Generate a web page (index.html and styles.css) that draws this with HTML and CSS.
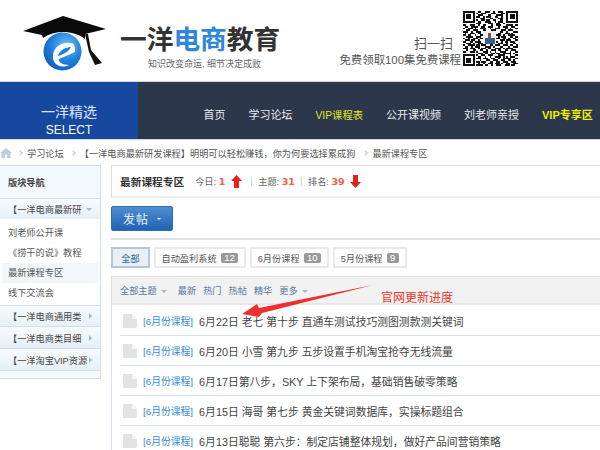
FILE: index.html
```html
<!DOCTYPE html>
<html lang="zh">
<head>
<meta charset="utf-8">
<title>最新课程专区</title>
<link rel="stylesheet" href="styles.css">
</head>
<body>
<header class="top">
  <div class="logo">
    <svg class="cap" width="84" height="56" viewBox="0 0 84 56">
      <defs>
        <radialGradient id="ball" cx="0.6" cy="0.35" r="0.75">
          <stop offset="0" stop-color="#6fc0f4"/>
          <stop offset="0.55" stop-color="#1f7fdc"/>
          <stop offset="1" stop-color="#0a58b8"/>
        </radialGradient>
      </defs>
      <circle cx="39.500" cy="36.500" r="19" fill="url(#ball)"/>
      <path d="M50 28.500 C42 26 31 30 30 40 C29 50 38 54 46 50 C40 50 35 47 36 44 L52 37 C52 33 52 30 50 28.500 Z" fill="#fff"/>
      <path d="M35 41 C36 36 42 32 48 32 C46 36 42 39 35 41 Z" fill="#1f7fdc"/>
      <path d="M0 16 L40 1 L83 14 L62 19 L62 24 C50 15 32 15 20 23 L19 20 Z" fill="#0a0a0a"/>
      <path d="M62 19 L65 19 L68 35 L79 48 L72 50 L66 37 Z" fill="#111"/>
    </svg>
    <div class="brand">
      <div class="brand-name">一洋<span class="blue">电商</span>教育</div>
      <div class="brand-sub">知识改变命运, 细节决定成败</div>
    </div>
  </div>
  <div class="scan">
    <div class="scan-text">
      <div class="scan-a">扫一扫</div>
      <div class="scan-b">免费领取100集免费课程</div>
    </div>
    <svg class="qr" width="55" height="55" viewBox="0 0 33 33" shape-rendering="crispEdges">
      <rect width="33" height="33" fill="#fff"/>
      <path fill="#111" d="M0 0h7v7H0zM26 0h7v7h-7zM0 26h7v7H0z"/>
      <path fill="#fff" d="M1 1h5v5H1zM27 1h5v5h-5zM1 27h5v5H1z"/>
      <path fill="#111" d="M2 2h3v3H2zM28 2h3v3h-3zM2 28h3v3H2z"/>
      <path stroke="#111" stroke-width="1" fill="none" d="M9 .5h2M13 .5h3M18 .5h1M21 .5h3M8 1.500h1M11 1.500h3M17 1.500h3M23 1.500h2M9 2.500h3M15 2.500h2M20 2.500h4M8 3.500h2M12 3.500h1M14 3.500h3M19 3.500h2M23 3.500h1M10 4.500h3M16 4.500h2M21 4.500h3M8 5.500h1M11 5.500h2M14 5.500h2M18 5.500h2M22 5.500h2M9 6.500h2M13 6.500h4M19 6.500h1M21 6.500h3M8 7.500h3M15 7.500h3M20 7.500h2M24 7.500h1M0 8.500h2M4 8.500h3M9 8.500h1M12 8.500h2M17 8.500h1M20 8.500h3M26 8.500h4M31 8.500h2M1 9.500h2M5 9.500h4M11 9.500h2M15 9.500h3M21 9.500h1M24 9.500h3M29 9.500h2M0 10.500h1M3 10.500h3M7 10.500h1M10 10.500h4M16 10.500h1M19 10.500h3M25 10.500h2M28 10.500h1M31 10.500h2M2 11.500h2M6 11.500h3M12 11.500h2M17 11.500h3M23 11.500h3M27 11.500h3M0 12.500h3M5 12.500h1M8 12.500h3M19 12.500h1M22 12.500h2M26 12.500h1M30 12.500h3M1 13.500h1M4 13.500h3M9 13.500h2M21 13.500h2M25 13.500h3M29 13.500h1M0 14.500h2M3 14.500h2M7 14.500h1M10 14.500h2M20 14.500h3M24 14.500h1M27 14.500h4M2 15.500h4M8 15.500h3M21 15.500h1M23 15.500h3M28 15.500h2M31 15.500h2M0 16.500h1M3 16.500h1M6 16.500h3M10 16.500h2M20 16.500h2M24 16.500h2M27 16.500h1M30 16.500h2M1 17.500h3M5 17.500h2M9 17.500h1M22 17.500h3M26 17.500h3M31 17.500h2M0 18.500h2M4 18.500h2M7 18.500h4M20 18.500h1M23 18.500h1M25 18.500h2M28 18.500h3M2 19.500h3M6 19.500h1M9 19.500h3M21 19.500h3M26 19.500h1M30 19.500h2M0 20.500h1M3 20.500h4M8 20.500h2M11 20.500h3M16 20.500h2M19 20.500h3M24 20.500h3M28 20.500h2M32 20.500h1M1 21.500h2M5 21.500h1M7 21.500h3M13 21.500h4M18 21.500h1M22 21.500h2M27 21.500h1M30 21.500h3M0 22.500h3M4 22.500h3M9 22.500h1M11 22.500h3M15 22.500h2M19 22.500h4M24 22.500h1M26 22.500h4M2 23.500h1M6 23.500h2M10 23.500h2M14 23.500h1M17 23.500h3M21 23.500h2M25 23.500h2M29 23.500h3M0 24.500h2M4 24.500h3M8 24.500h1M12 24.500h3M16 24.500h1M19 24.500h1M22 24.500h4M28 24.500h1M31 24.500h2M9 25.500h3M13 25.500h2M17 25.500h2M20 25.500h2M24 25.500h5M30 25.500h1M8 26.500h1M11 26.500h2M15 26.500h3M21 26.500h3M24 26.500h1M28 26.500h1M31 26.500h2M9 27.500h2M13 27.500h1M16 27.500h1M19 27.500h4M24 27.500h1M26 27.500h1M28 27.500h3M8 28.500h3M12 28.500h3M17 28.500h2M21 28.500h1M24 28.500h5M31 28.500h2M10 29.500h1M14 29.500h2M18 29.500h3M23 29.500h2M27 29.500h2M30 29.500h1M8 30.500h2M11 30.500h3M16 30.500h2M20 30.500h2M24 30.500h3M29 30.500h3M9 31.500h1M12 31.500h1M15 31.500h3M19 31.500h3M23 31.500h1M26 31.500h2M30 31.500h3M8 32.500h4M13 32.500h2M17 32.500h1M20 32.500h3M25 32.500h3M29 32.500h2"/>
      <rect x="12" y="12" width="8" height="8" fill="#eef1f5"/>
      <rect x="13" y="16" width="6" height="4" fill="#3c5f88"/>
      <rect x="15" y="13" width="2" height="3" fill="#7a5a44"/>
    </svg>
  </div>
</header>

<nav class="nav">
  <div class="select">
    <div class="select-a">一洋精选</div>
    <div class="select-b">SELECT</div>
  </div>
  <div class="menu">
    <a class="mi">首页</a>
    <a class="mi">学习论坛</a>
    <a class="mi vip">VIP课程表</a>
    <a class="mi">公开课视频</a>
    <a class="mi">刘老师亲授</a>
    <a class="mi vip strong">VIP专享区</a>
  </div>
</nav>

<div class="crumbs">
  <svg class="home" width="12" height="10" viewBox="0 0 12 10"><path d="M6 0 L12 5 H10.500 V10 H7 V6.500 H5 V10 H1.500 V5 H0 Z" fill="#b9cfdf"/></svg>
  <i class="sep"></i><span>学习论坛</span><i class="sep s2"></i><span>【一洋电商最新研发课程】明明可以轻松赚钱，你为何要选择累成狗</span><i class="sep s3"></i><span>最新课程专区</span>
</div>

<main class="wrap">
  <aside class="side">
    <div class="side-title">版块导航</div>
    <div class="group">【一洋电商最新研<i class="down side-arrow"></i></div>
    <div class="side-links">
      <div class="link">刘老师公开课</div>
      <div class="link">《捞干的说》教程</div>
      <div class="link on">最新课程专区</div>
      <div class="link">线下交流会</div>
    </div>
    <div class="group">【一洋电商通用类<i class="right side-arrow"></i></div>
    <div class="group">【一洋电商类目细<i class="right side-arrow"></i></div>
    <div class="group">【一洋淘宝VIP资源<i class="right side-arrow"></i></div>
    <div class="side-end"></div>
  </aside>

  <section class="content">
    <div class="head">
      <b class="head-title">最新课程专区</b>
      <span class="stat">今日: <b>1</b></span>
      <svg class="arrow a1" width="11" height="13" viewBox="0 0 11 13"><path d="M5.500 0 L11 6 H8 V13 H3 V6 H0 Z" fill="#e8201c"/></svg>
      <i class="bar"></i>
      <span class="stat">主题: <b>31</b></span>
      <i class="bar b2"></i>
      <span class="stat">排名: <b>39</b></span>
      <svg class="arrow" width="11" height="13" viewBox="0 0 11 13"><path d="M5.500 13 L11 7 H8 V0 H3 V7 H0 Z" fill="#e8201c"/></svg>
    </div>
    <div class="post-row">
      <button class="post">发帖<i class="caret"></i></button>
    </div>
    <div class="tabs">
      <span class="tab active">全部</span>
      <span class="tab">自动盈利系统<em>12</em></span>
      <span class="tab">6月份课程<em>10</em></span>
      <span class="tab">5月份课程<em>9</em></span>
    </div>
    <div class="filter">
      <span class="f-first">全部主题<i class="down"></i></span>
      <span>最新</span><span>热门</span><span>热帖</span><span>精华</span><span>更多<i class="down"></i></span>
    </div>
    <ul class="list">
      <li class="row"><svg class="doc" width="14" height="14" viewBox="0 0 14 14"><path d="M1 0 H9 L14 5 V13 Q14 14 13 14 H1 Q0 14 0 13 V1 Q0 0 1 0 Z" fill="#e3e3e3"/><path d="M9 0 V5 H14 Z" fill="#f5f5f5"/></svg><a>[6月份课程]</a><span class="t">6月22日 老七 第十步 直通车测试技巧测图测款测关键词</span></li>
      <li class="row"><svg class="doc" width="14" height="14" viewBox="0 0 14 14"><path d="M1 0 H9 L14 5 V13 Q14 14 13 14 H1 Q0 14 0 13 V1 Q0 0 1 0 Z" fill="#e3e3e3"/><path d="M9 0 V5 H14 Z" fill="#f5f5f5"/></svg><a>[6月份课程]</a><span class="t">6月20日 小雪 第九步 五步设置手机淘宝抢夺无线流量</span></li>
      <li class="row"><svg class="doc" width="14" height="14" viewBox="0 0 14 14"><path d="M1 0 H9 L14 5 V13 Q14 14 13 14 H1 Q0 14 0 13 V1 Q0 0 1 0 Z" fill="#e3e3e3"/><path d="M9 0 V5 H14 Z" fill="#f5f5f5"/></svg><a>[6月份课程]</a><span class="t">6月17日第八步，SKY 上下架布局，基础销售破零策略</span></li>
      <li class="row"><svg class="doc" width="14" height="14" viewBox="0 0 14 14"><path d="M1 0 H9 L14 5 V13 Q14 14 13 14 H1 Q0 14 0 13 V1 Q0 0 1 0 Z" fill="#e3e3e3"/><path d="M9 0 V5 H14 Z" fill="#f5f5f5"/></svg><a>[6月份课程]</a><span class="t">6月15日 海哥 第七步 黄金关键词数据库，实操标题组合</span></li>
      <li class="row"><svg class="doc" width="14" height="14" viewBox="0 0 14 14"><path d="M1 0 H9 L14 5 V13 Q14 14 13 14 H1 Q0 14 0 13 V1 Q0 0 1 0 Z" fill="#e3e3e3"/><path d="M9 0 V5 H14 Z" fill="#f5f5f5"/></svg><a>[6月份课程]</a><span class="t">6月13日聪聪 第六步：制定店铺整体规划，做好产品间营销策略</span></li>
    </ul>
    <svg class="note-arrow" width="136" height="36" viewBox="0 0 136 36"><path d="M2 31 L17 21 L19 25 L133 2 L22 30 L19 34 Z" fill="#ee2f2f"/></svg>
    <span class="note">官网更新进度</span>
  </section>
</main>
</body>
</html>
```
FILE: styles.css
```css
* { box-sizing: border-box; }
html, body { margin: 0; padding: 0; }
body {
  width: 600px;
  height: 450px;
  overflow: hidden;
  background: #fff;
  color: #444;
  font-family: "Liberation Sans", "Noto Sans CJK SC", sans-serif;
  font-size: 9.2px;
}
i, em { font-style: normal; }
ul { list-style: none; margin: 0; padding: 0; }

.top { height: 82px; display: flex; justify-content: space-between; padding: 15px 82px 0 23px; border-bottom: 1px solid #d8d8d8; }
.logo { display: flex; gap: 13px; }
.brand { padding-top: 8px; }
.brand-name { font-size: 26.700px; line-height: 34px; font-weight: 700; color: #333; white-space: nowrap; }
.blue { color: #2f86dc; }
.brand-sub { font-size: 9px; line-height: 14px; color: #666; padding-left: 28px; white-space: nowrap; }
.scan { display: flex; align-items: flex-start; gap: 2px; margin-top: -4px; height: 55px; }
.scan-text { text-align: right; color: #555; padding-top: 25px; }
.scan-a { font-size: 13px; line-height: 16px; padding-right: 8px; }
.scan-b { font-size: 11.400px; line-height: 16px; white-space: nowrap; }

.nav { height: 57px; display: flex; background: #2d374b; }
.select { flex: none; width: 138px; background: #1648a0; color: #fff; text-align: center; padding-top: 21px; }
.select-a { font-size: 14px; line-height: 18px; color: #dce6f5; }
.select-b { font-size: 12px; line-height: 18px; }
.menu { flex: 1; min-width: 0; display: flex; align-items: center; gap: 23px; padding: 7px 0 0 65.500px; font-size: 11px; color: #e6e9ef; white-space: nowrap; }
.mi { display: block; }
.vip { color: #e4e823; font-size: 10.300px; }
.strong { font-weight: 700; color: #eef000; font-size: 11px; }

.crumbs { height: 26px; display: flex; align-items: center; color: #555; white-space: nowrap; border-top: 1px solid #d8d8d8; }
.sep { width: 4px; height: 4px; margin: 0 5px 0 6px; border-top: 1px solid #bcc6ce; border-right: 1px solid #bcc6ce; transform: rotate(45deg); }
.s2 { margin-left: 7px; }
.s3 { margin-left: 8px; }

.wrap { display: flex; align-items: flex-start; }
.side { flex: none; width: 101px; border: 1px solid #cfe0ec; border-left: 0; background: #f3f9fc; }
.side-title { height: 32px; line-height: 34px; padding-left: 8px; font-weight: 700; color: #444; }
.group { height: 22px; border-top: 1px solid #cfe0ec; border-bottom: 1px solid #cfe0ec; margin-bottom: -1px; padding: 0 8px; display: flex; align-items: center; color: #444; white-space: nowrap; background: linear-gradient(#f7fbfd, #e5f0f6); }
.group + .group { height: 23px; }
.side-links { background: #fff; padding: 4px 0 2px; }
.link { height: 20px; line-height: 20px; padding-left: 8px; color: #555; }
.link.on { background: #f2f5f9; margin: 0 2px; padding-left: 6px; }
.side-end { height: 8px; }
.down { display: inline-block; vertical-align: middle; margin-left: 4px; border: 3px solid transparent; border-top: 3px solid #a9bccb; border-bottom: 0; }
.right { display: inline-block; border: 3px solid transparent; border-left: 3px solid #9db8cc; border-right: 0; }
.side-arrow { margin-left: auto; }

.content { position: relative; flex: 1; margin-left: 10px; min-width: 0; }
.head { height: 33px; display: flex; align-items: center; padding-left: 8px; border: 1px solid #dcdcdc; border-right: 0; border-bottom: 2px solid #eeeeee; white-space: nowrap; color: #666; }
.head-title { font-size: 10.700px; color: #333; margin-right: 11px; }
.stat b { font-family: "DejaVu Sans", sans-serif; color: #f2604a; font-weight: 700; font-size: 9.500px; }
.arrow { margin-left: 5px; }
.a1 { margin-left: 6px; }
.bar { width: 1px; height: 9px; background: #c8dbe8; margin: 0 6px 0 9px; }
.b2 { margin-left: 6px; }
.post-row { height: 42px; padding-top: 8px; border-bottom: 2px solid #e2e2e2; }
.post { display: flex; align-items: center; justify-content: center; width: 62px; height: 25px; padding: 0; border: 1px solid #2f6fb0; border-radius: 2px; background: linear-gradient(#4f8ed0, #1f64b2); color: #e8f1fb; font-family: inherit; font-size: 12px; letter-spacing: 1px; }
.caret { margin-left: 8px; border: 2px solid transparent; border-top: 2px solid #fff; border-bottom: 0; }
.tabs { display: flex; gap: 3.500px; height: 36px; padding-top: 7px; }
.tab { display: flex; align-items: center; height: 21px; padding: 0 6px; border: 2px solid #e9e9e9; color: #555; white-space: nowrap; }
.tab.active { border-color: #b4c8da; background: #e8eff6; color: #2f628f; width: 39px; justify-content: center; }
.tab em { margin-left: 4px; padding: 0 3.500px; height: 10px; line-height: 10px; border-radius: 2px; background: #999; color: #fff; font-size: 9.500px; }
.filter { display: flex; height: 29px; align-items: center; gap: 7px; padding-left: 8px; background: #f2f2f2; border: 1px solid #dcdcdc; border-right: 0; border-bottom: 2px solid #e6e6e6; color: #55789c; }
.f-first { margin-right: 4px; }
.list { border-left: 1px solid #d8e2ea; padding-top: 1px; }
.row { height: 30px; display: flex; align-items: center; margin-left: 8px; padding-left: 3px; border-bottom: 1px solid #d8e2ea; white-space: nowrap; font-size: 10.800px; }
.row a { color: #3a8bd8; margin-left: 6px; font-size: 9.800px; }
.t { color: #444; margin-left: 6px; }
.note-arrow { position: absolute; left: 129px; top: 118px; }
.note { position: absolute; left: 270px; top: 125px; font-size: 12px; line-height: 16px; color: #e8392e; }
```
